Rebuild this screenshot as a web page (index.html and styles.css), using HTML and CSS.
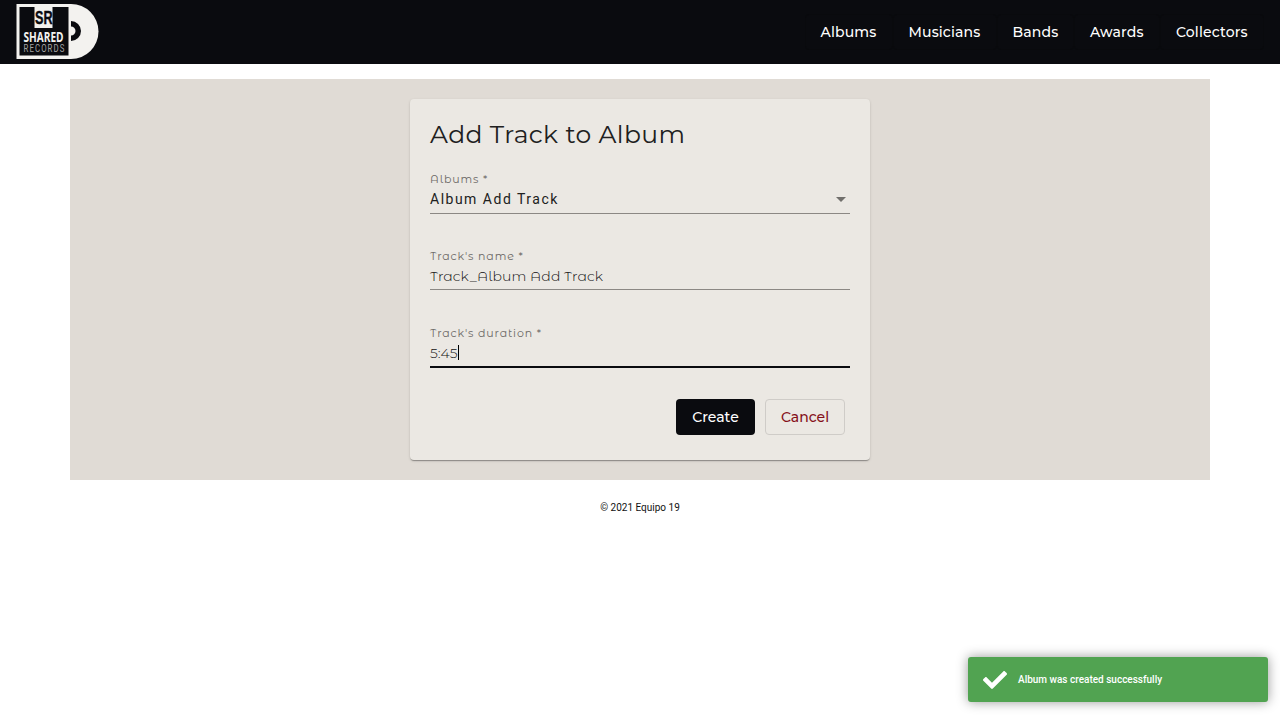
FILE: index.html
```html
<!DOCTYPE html>
<html lang="en">
<head>
<meta charset="utf-8">
<title>Shared Records</title>
<link rel="stylesheet" href="styles.css">
</head>
<body>
<header class="toolbar">
  <svg class="logo" width="84" height="56" viewBox="0 0 84 56" role="img" aria-label="Shared Records">
    <path d="M1.500 0H56A27.500 27.500 0 0 1 56 55H1.500Z" fill="#f3f2ef"/>
    <path d="M56 17A10 10 0 0 1 56 37V31.500A4.500 4.500 0 0 0 56 22.500Z" fill="#0a0b0f"/>
    <path d="M4.500 3H19.500V24H37.500V3H53.500V51.500H4.500Z" fill="#0a0b0f"/>
    <text class="logo-sr" x="20" y="19.500" textLength="17.500" lengthAdjust="spacingAndGlyphs">SR</text>
    <text class="logo-shared" x="8.500" y="37.500" textLength="40" lengthAdjust="spacingAndGlyphs">SHARED</text>
    <text class="logo-records" x="8.500" y="48.300" textLength="42" lengthAdjust="spacingAndGlyphs">RECORDS</text>
  </svg>
  <nav class="nav">
    <a class="nav-item albums">Albums</a>
    <a class="nav-item musicians">Musicians</a>
    <a class="nav-item bands">Bands</a>
    <a class="nav-item awards">Awards</a>
    <a class="nav-item collectors">Collectors</a>
  </nav>
</header>
<main class="container">
  <form class="card">
    <h1 class="title">Add Track to Album</h1>
    <div class="field">
      <label class="label">Albums *</label>
      <div class="value select"><span>Album Add Track</span><i class="arrow"></i></div>
    </div>
    <div class="field">
      <label class="label">Track's name *</label>
      <div class="value light"><span>Track_Album Add Track</span></div>
    </div>
    <div class="field focused">
      <label class="label">Track's duration *</label>
      <div class="value light"><span>5:45</span><i class="caret"></i></div>
    </div>
    <div class="actions">
      <button type="button" class="btn create">Create</button>
      <button type="button" class="btn cancel">Cancel</button>
    </div>
  </form>
</main>
<footer class="footer">© 2021 Equipo 19</footer>
<div class="toast">
  <svg width="24" height="24" viewBox="0 0 512 512"><path fill="#fff" d="M173.900 439.400l-166.400-166.400c-10-10-10-26.200 0-36.200l36.200-36.200c10-10 26.200-10 36.200 0L192 312.700 432.100 72.600c10-10 26.200-10 36.200 0l36.200 36.200c10 10 10 26.200 0 36.200l-294.400 294.400c-10 10-26.200 10-36.200 0z"/></svg>
  <span>Album was created successfully</span>
</div>
</body>
</html>
```
FILE: styles.css
```css
* { box-sizing: border-box; }
body { margin: 0; background: #fff; font-family: Roboto, sans-serif; height: 720px; overflow: hidden; }
.toolbar { height: 64px; background: #0a0b0f; display: flex; align-items: center; justify-content: space-between; padding: 0 16px 0 15px; }
.logo { display: block; margin-top: -1px; }
.logo-sr { font: bold 18px "Liberation Sans", sans-serif; fill: #0a0b0f; stroke: #0a0b0f; stroke-width: .4px; }
.logo-shared { font: bold 14px "Open Sans", sans-serif; fill: #f3f2ef; }
.logo-records { font: 10.500px Roboto, sans-serif; letter-spacing: 1.500px; fill: #a3a3a3; }
.nav { display: flex; }
.nav-item { height: 36px; padding-left: 16px; color: #fff; font: 500 14px/36px Montserrat, sans-serif; letter-spacing: .15px; white-space: nowrap; border-radius: 4px; box-shadow: inset 0 0 0 1px #090a0d; }
.albums { width: 88px; }
.musicians { width: 104px; }
.bands { width: 77.500px; }
.awards { width: 86px; }
.collectors { width: 104px; }
.container { width: 1140px; height: 401px; margin: 15px auto 0; padding: 20px; background: #e0dbd5; display: flex; justify-content: center; align-items: flex-start; }
.card { width: 460px; height: 361px; padding: 20px; background: #ebe8e3; border-radius: 4px; box-shadow: 0 2px 1px -1px rgba(0,0,0,.2), 0 1px 1px rgba(0,0,0,.14), 0 1px 3px rgba(0,0,0,.12); }
.title { margin: 0; height: 51px; font: 400 25px/30px Montserrat, sans-serif; letter-spacing: .4px; color: #202020; white-space: nowrap; }
.field { height: 77px; }
.field:nth-of-type(1) .value { height: 26px; }
.label { display: block; height: 18px; font: 11px/18px "Montserrat Alternates", Montserrat, sans-serif; color: #6b6866; letter-spacing: .85px; }
.value { height: 25px; border-bottom: 1px solid #8b8884; font-size: 14px; line-height: 20px; color: #202020; display: flex; align-items: flex-start; white-space: nowrap; }
.select { justify-content: space-between; letter-spacing: 1.500px; line-height: 22px; }
.arrow { width: 0; height: 0; margin: 9px 4px 0 0; border: 5px solid transparent; border-top-color: #716f6c; border-bottom: 0; }
.light { font-family: "Montserrat Alternates", Montserrat, sans-serif; font-weight: 300; line-height: 22px; letter-spacing: .08px; color: #111; }
.focused .light { letter-spacing: 0; }
.focused .value { height: 26px; border-bottom: 2px solid #0a0b0f; }
.caret { width: 1px; height: 15px; margin-top: 3px; background: #000; }
.actions { display: flex; justify-content: flex-end; gap: 10px; padding: 0 5px 0 0; margin-top: -2px; }
.btn { height: 36px; border: 0; border-radius: 4px; padding: 0; font: 500 14px/34px Montserrat, sans-serif; white-space: nowrap; }
.create { width: 79px; background: #0a0b0f; color: #fff; }
.cancel { width: 80px; background: transparent; border: 1px solid #cfccc8; color: #85101a; }
.footer { margin-top: 20px; text-align: center; font-size: 10px; line-height: 15px; color: #111; }
.toast { position: absolute; right: 12px; bottom: 18px; width: 300px; height: 45px; padding-left: 15px; display: flex; align-items: center; gap: 11px; background: #51a351; border-radius: 3px; box-shadow: 0 0 12px #999; color: #fff; font-size: 10px; font-weight: 500; }
```
